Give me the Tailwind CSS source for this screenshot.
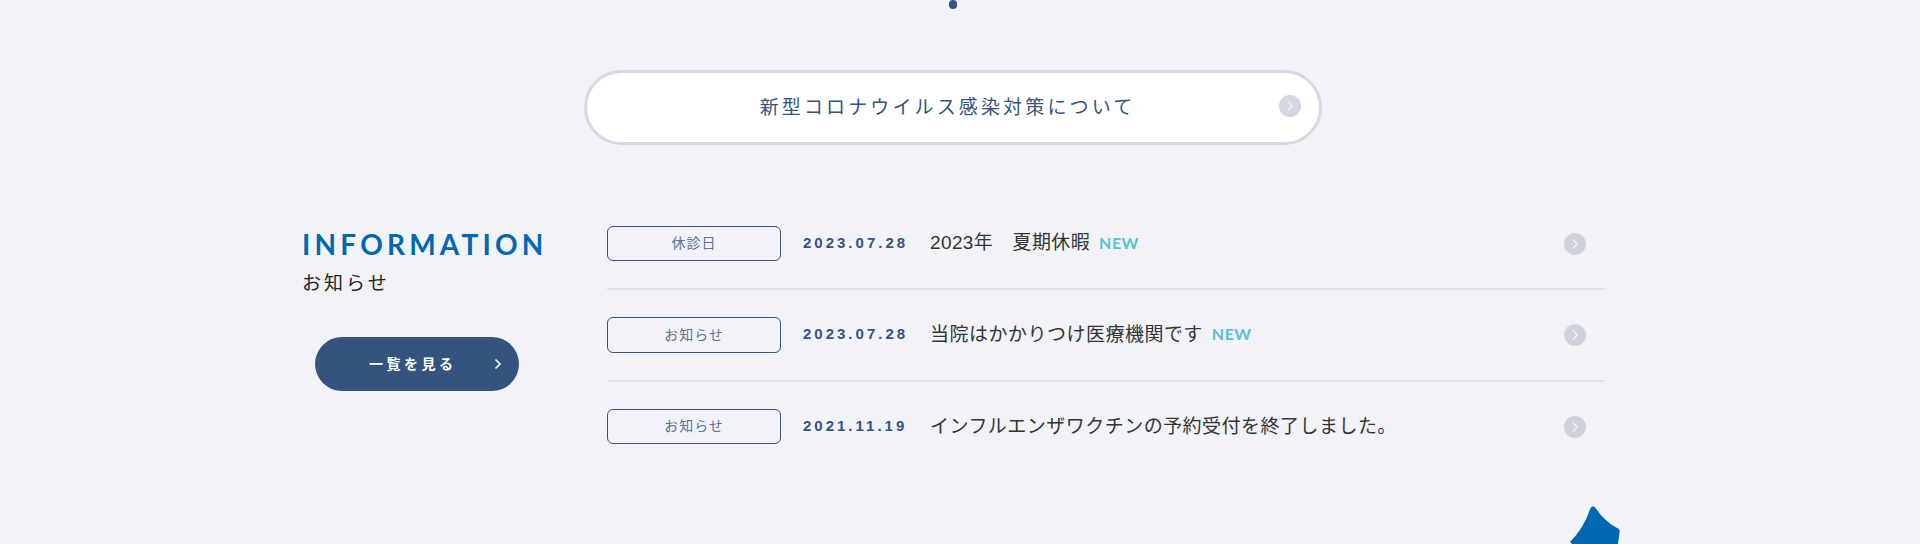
<!DOCTYPE html>
<html lang="ja">
<head>
<meta charset="utf-8">
<script src="https://cdn.jsdelivr.net/npm/@tailwindcss/browser@4"></script>
</head>
<body class="bg-[#f1f3f8] font-['Noto_Sans_CJK_JP',sans-serif]">
<main class="relative h-[544px] w-[1920px] overflow-hidden">
  <div class="ml-[949px] h-[9px] w-[8px] rounded-full bg-[#35537f]"></div>

  <a class="relative ml-[584px] mt-[61px] flex h-[75px] w-[738px] items-center justify-center rounded-full border-[3px] border-[#d6d9e4] bg-white pb-[2px] pr-[11px] text-[19px] font-normal tracking-[0.165em] text-[#35537f]">
    新型コロナウイルス感染対策について
    <span class="absolute right-[18px] top-[22px] flex h-[22px] w-[22px] items-center justify-center rounded-full bg-[#d4d7e2]">
      <svg width="8" height="12" viewBox="0 0 8 12" fill="none" stroke="#f1f3f8" stroke-width="1.3"><path d="M2 1.500 6.200 6 2 10.500"/></svg>
    </span>
  </a>

  <div class="ml-[303px] mt-[80px] flex">
    <section class="w-[304px] shrink-0">
      <h2 class="ml-[-1px] mt-[5px] h-[28px] font-['Lato',sans-serif] text-[28px] font-bold leading-[28px] tracking-[0.15em] text-[#0068b0]">INFORMATION</h2>
      <p class="ml-[-1px] mt-[11px] text-[19px] leading-[26px] font-normal tracking-[0.16em] text-[#222]">お知らせ</p>
      <a class="relative ml-[12px] mt-[42px] flex h-[54px] w-[204px] items-center rounded-full bg-[#35537f] pb-[2px] pl-[54px] text-[14px] font-bold tracking-[0.25em] text-white">
        一覧を見る
        <svg class="absolute left-[179px] top-[21px]" width="8" height="12" viewBox="0 0 8 12" fill="none" stroke="#fff" stroke-width="1.6"><path d="M1.500 1.500 6 6 1.500 10.500"/></svg>
      </a>
    </section>

    <section class="mt-[-1px] w-[998px] shrink-0 font-['Liberation_Sans','Noto_Sans_CJK_JP',sans-serif]">
      <a class="flex h-[66px] items-start border-b-2 border-[#e1e3e9] pr-[19px]">
        <span class="mt-[2px] flex h-[35px] w-[174px] shrink-0 items-center justify-center rounded-[6px] border border-[#35537f] text-[14px] font-normal tracking-[0.07em] text-[#5a7298]">休診日</span>
        <span class="ml-[22px] mt-[9px] w-[127px] shrink-0 text-[15px] font-bold leading-[20px] tracking-[0.2em] text-[#35537f]">2023.07.28</span>
        <span class="mt-[6px] text-[19px] font-normal leading-[26px] tracking-[0.02em] text-[#333]">2023年　夏期休暇</span>
        <span class="ml-[9px] mt-[9px] font-['Lato',sans-serif] text-[16px] font-bold leading-[20px] tracking-[0.03em] text-[#5bc0cf]">NEW</span>
        <span class="ml-auto mt-[9px] flex h-[22px] w-[22px] items-center justify-center rounded-full bg-[#cfd1dd]">
          <svg width="8" height="12" viewBox="0 0 8 12" fill="none" stroke="#f1f3f8" stroke-width="1.2"><path d="M2 1.500 6.200 6 2 10.500"/></svg>
        </span>
      </a>
      <a class="flex h-[92px] items-start border-b-2 border-[#e1e3e9] pr-[19px]">
        <span class="mt-[27px] flex h-[36px] w-[174px] shrink-0 items-center justify-center rounded-[6px] border border-[#35537f] text-[14px] font-normal tracking-[0.07em] text-[#5a7298]">お知らせ</span>
        <span class="ml-[22px] mt-[34px] w-[127px] shrink-0 text-[15px] font-bold leading-[20px] tracking-[0.2em] text-[#35537f]">2023.07.28</span>
        <span class="mt-[32px] text-[19px] font-normal leading-[26px] tracking-[0.025em] text-[#333]">当院はかかりつけ医療機関です</span>
        <span class="ml-[9px] mt-[34px] font-['Lato',sans-serif] text-[16px] font-bold leading-[20px] tracking-[0.03em] text-[#5bc0cf]">NEW</span>
        <span class="ml-auto mt-[34px] flex h-[22px] w-[22px] items-center justify-center rounded-full bg-[#cfd1dd]">
          <svg width="8" height="12" viewBox="0 0 8 12" fill="none" stroke="#f1f3f8" stroke-width="1.2"><path d="M2 1.500 6.200 6 2 10.500"/></svg>
        </span>
      </a>
      <a class="flex h-[92px] items-start pr-[19px]">
        <span class="mt-[27px] flex h-[35px] w-[174px] shrink-0 items-center justify-center rounded-[6px] border border-[#35537f] text-[14px] font-normal tracking-[0.07em] text-[#5a7298]">お知らせ</span>
        <span class="ml-[22px] mt-[34px] w-[127px] shrink-0 text-[15px] font-bold leading-[20px] tracking-[0.2em] text-[#35537f]">2021.11.19</span>
        <span class="mt-[32px] text-[19px] font-normal leading-[26px] tracking-[0.025em] text-[#333]">インフルエンザワクチンの予約受付を終了しました。</span>
        <span class="ml-auto mt-[34px] flex h-[22px] w-[22px] items-center justify-center rounded-full bg-[#cfd1dd]">
          <svg width="8" height="12" viewBox="0 0 8 12" fill="none" stroke="#f1f3f8" stroke-width="1.2"><path d="M2 1.500 6.200 6 2 10.500"/></svg>
        </span>
      </a>
    </section>
  </div>

  <svg class="absolute left-[1565px] top-[500px]" width="60" height="44" viewBox="0 0 60 44">
    <path d="M25.500 8Q28 4.500 30.500 8Q40 22 53 28.500Q55 29.500 54.500 32L53 44H7L5 42Q19 28 25.500 8Z" fill="#0068b0"/>
  </svg>
</main>
</body>
</html>
